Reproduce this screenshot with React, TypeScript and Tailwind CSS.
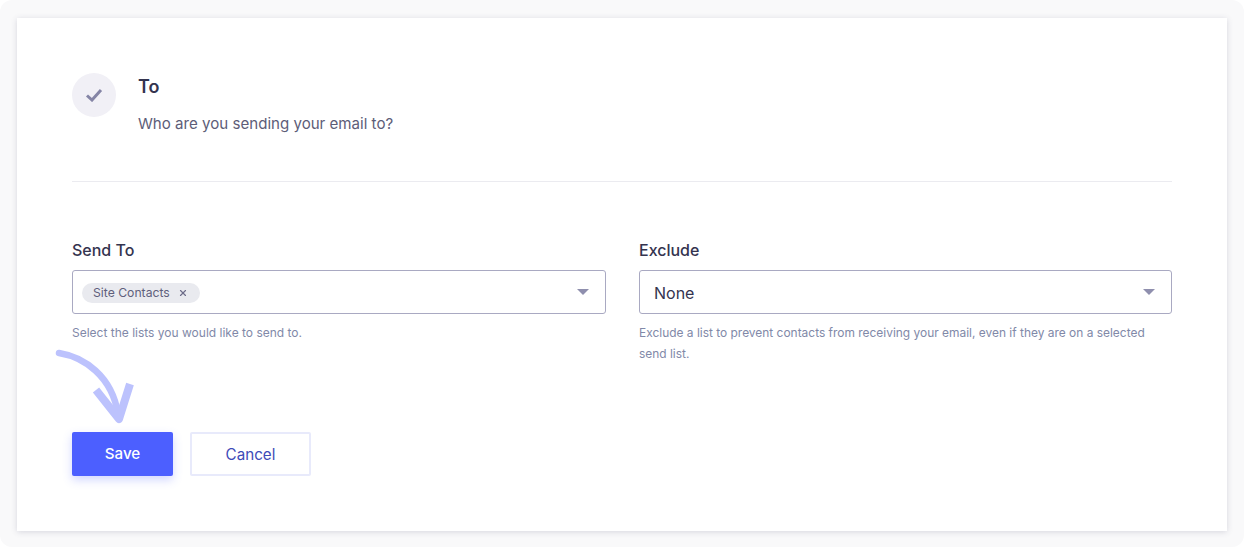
import { X } from "lucide-react";

const font = "font-['Inter',sans-serif]";

const Caret = () => (
    <svg width="12" height="6" viewBox="0 0 12 6" className="shrink-0">
        <path d="M0 0H12L6 6Z" fill="#8f8fae" />
    </svg>
);

const App = () => {
    return (
        <div className={"h-[547px] w-[1244px] overflow-hidden rounded-[12px] bg-[#f9f9fa] px-[17px] pt-[18px] " + font}>
            <div className="h-[513px] w-[1210px] bg-white px-[55px] pt-[55px] shadow-[0_1px_6px_rgba(60,60,100,0.18)]">
                <div className="flex h-[109px] items-start gap-[22px] border-b border-[#ebebf0]">
                    <div className="flex h-[44px] w-[44px] items-center justify-center rounded-full bg-[#f1f0f6]">
                        <svg width="18" height="14" viewBox="0 0 18 14" fill="none">
                            <path d="M2 7.5L7 12L16 2" stroke="#8585a6" strokeWidth="3" />
                        </svg>
                    </div>
                    <div>
                        <div className="text-[18px] leading-[28px] font-semibold text-[#34344f]">To</div>
                        <div className="mt-[11px] text-[15.1px] leading-[24px] text-[#5d5d78]">Who are you sending your email to?</div>
                    </div>
                </div>

                <div className="mt-[56px] flex gap-[33px]">
                    <div className="w-[534px]">
                        <div className="text-[16px] leading-[24px] font-medium text-[#34344f]">Send To</div>
                        <div className="mt-[8px] flex h-[44px] items-center justify-between rounded-[3px] border border-[#a9a9c2] pr-[16px] pl-[9px]">
                            <div className="mt-[2px] flex h-[20px] items-center gap-[8px] rounded-full bg-[#e9eaef] pr-[12px] pl-[11px] text-[12.2px] text-[#5f5f7c]">
                                Site Contacts
                                <X size={10} strokeWidth={2.8} className="text-[#6d6d8a]" />
                            </div>
                            <Caret />
                        </div>
                        <p className="mt-[8px] text-[12px] leading-[21px] text-[#8189a8]">Select the lists you would like to send to.</p>
                    </div>
                    <div className="w-[533px]">
                        <div className="text-[16px] leading-[24px] font-medium text-[#34344f]">Exclude</div>
                        <div className="mt-[8px] flex h-[44px] items-center justify-between rounded-[3px] border border-[#a9a9c2] pr-[16px] pl-[14px]">
                            <span className="mt-[2px] text-[16px] text-[#34344f]">None</span>
                            <Caret />
                        </div>
                        <p className="mt-[8px] w-[520px] text-[11.95px] leading-[21px] text-[#8189a8]">
                            Exclude a list to prevent contacts from receiving your email, even if they are on a selected send list.
                        </p>
                    </div>
                </div>

                <div className="relative mt-[68px] flex gap-[17px]">
                    <svg width="84" height="84" viewBox="0 0 84 84" fill="none" className="absolute top-[-84px] left-[-18px]">
                        <path d="M5 5C30 9 58 28 64 66" stroke="#bcc2fd" strokeWidth="6.5" strokeLinecap="round" />
                        <path d="M42 42L65 71L76 36" stroke="#bcc2fd" strokeWidth="8" strokeLinejoin="round" />
                    </svg>
                    <button className="h-[44px] w-[101px] rounded-[2px] bg-[#4c5fff] text-[15.2px] font-medium text-white shadow-[0_4px_10px_rgba(76,95,255,0.25)]">Save</button>
                    <button className="h-[44px] w-[121px] rounded-[2px] border-2 border-[#e8eafb] bg-white pt-[2px] text-[15.2px] text-[#3e4bb8]">Cancel</button>
                </div>
            </div>
        </div>
    );
};

export default App;
